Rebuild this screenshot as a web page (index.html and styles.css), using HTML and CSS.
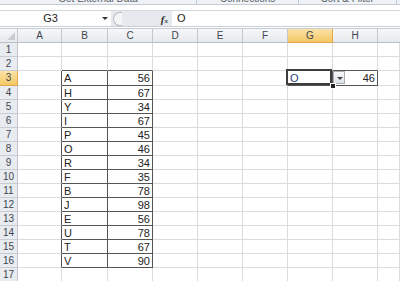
FILE: index.html
```html
<!DOCTYPE html>
<html lang="en">
<head>
    <meta charset="UTF-8">
    <title>Book1 - Excel</title>
    <link rel="stylesheet" href="styles.css">
</head>
<body>
    <div class="ribbon">
        <span class="group g1">Get External Data</span>
        <span class="group g2">Connections</span>
        <span class="group g3">Sort &amp; Filter</span>
    </div>

    <div class="formula-bar">
        <div class="name-box">G3<span class="arrow"></span></div>
        <div class="fx-area">
            <span class="handle"></span>
            <span class="fx">f<small>x</small></span>
        </div>
        <div class="formula-input">O</div>
    </div>

    <div class="sheet">
        <div class="corner"><span class="tri"></span></div>
        <div class="ch">A</div><div class="ch">B</div><div class="ch">C</div><div class="ch">D</div>
        <div class="ch">E</div><div class="ch">F</div><div class="ch sel">G</div><div class="ch">H</div><div class="ch last"></div>

        <div class="rh">1</div><div></div><div></div><div></div><div></div><div></div><div></div><div></div><div></div><div></div>
        <div class="rh">2</div><div></div><div class="bb"></div><div class="bb"></div><div></div><div></div><div></div><div class="bb"></div><div class="bb"></div><div></div>

        <div class="rh sel">3</div><div class="br"></div><div class="t">A</div><div class="t n">56</div><div></div><div></div><div class="br"></div>
        <div class="active">O<span class="sel-box"></span><span class="drop"></span><span class="fill"></span></div>
        <div class="t n">46</div><div></div>

        <div class="rh">4</div><div class="br"></div><div class="t">H</div><div class="t n">67</div><div></div><div></div><div></div><div></div><div></div><div></div>
        <div class="rh">5</div><div class="br"></div><div class="t">Y</div><div class="t n">34</div><div></div><div></div><div></div><div></div><div></div><div></div>
        <div class="rh">6</div><div class="br"></div><div class="t">I</div><div class="t n">67</div><div></div><div></div><div></div><div></div><div></div><div></div>
        <div class="rh">7</div><div class="br"></div><div class="t">P</div><div class="t n">45</div><div></div><div></div><div></div><div></div><div></div><div></div>
        <div class="rh">8</div><div class="br"></div><div class="t">O</div><div class="t n">46</div><div></div><div></div><div></div><div></div><div></div><div></div>
        <div class="rh">9</div><div class="br"></div><div class="t">R</div><div class="t n">34</div><div></div><div></div><div></div><div></div><div></div><div></div>
        <div class="rh">10</div><div class="br"></div><div class="t">F</div><div class="t n">35</div><div></div><div></div><div></div><div></div><div></div><div></div>
        <div class="rh">11</div><div class="br"></div><div class="t">B</div><div class="t n">78</div><div></div><div></div><div></div><div></div><div></div><div></div>
        <div class="rh">12</div><div class="br"></div><div class="t">J</div><div class="t n">98</div><div></div><div></div><div></div><div></div><div></div><div></div>
        <div class="rh">13</div><div class="br"></div><div class="t">E</div><div class="t n">56</div><div></div><div></div><div></div><div></div><div></div><div></div>
        <div class="rh">14</div><div class="br"></div><div class="t">U</div><div class="t n">78</div><div></div><div></div><div></div><div></div><div></div><div></div>
        <div class="rh">15</div><div class="br"></div><div class="t">T</div><div class="t n">67</div><div></div><div></div><div></div><div></div><div></div><div></div>
        <div class="rh">16</div><div class="br"></div><div class="t">V</div><div class="t n">90</div><div></div><div></div><div></div><div></div><div></div><div></div>
        <div class="rh">17</div><div></div><div></div><div></div><div></div><div></div><div></div><div></div><div></div><div></div>
    </div>
</body>
</html>
```

FILE: styles.css
```css
body {
    margin: 0;
    font-family: "Liberation Sans", Arial, sans-serif;
    font-size: 11px;
    color: #222;
    background-color: #ffffff;
    width: 400px;
    height: 281px;
    overflow: hidden;
}

/* ribbon group labels, cut off at the top */
.ribbon {
    height: 4px;
    overflow: hidden;
    position: relative;
    background-color: #eef1f5;
    border-bottom: 1px solid #c5cbd3;
    display: flex;
    font-size: 10px;
    color: #5a5f66;
}

.group {
    display: block;
    margin-top: -7px;
    line-height: 12px;
    text-align: center;
    border-right: 1px solid #c5cbd3;
}

.g1 {
    width: 196px;
}

.g2 {
    width: 101px;
}

.g3 {
    width: 97px;
}

.formula-bar {
    margin-top: 5px;
    height: 15px;
    display: flex;
    background-color: #e3e7ec;
    border-top: 1px solid #d3d8de;
    border-bottom: 1px solid #c8ced5;
}

.name-box {
    width: 111px;
    background-color: #ffffff;
    text-align: center;
    line-height: 15px;
    position: relative;
    padding-right: 10px;
    box-sizing: border-box;
}

.name-box .arrow {
    position: absolute;
    right: 3px;
    top: 6px;
    border-left: 3px solid transparent;
    border-right: 3px solid transparent;
    border-top: 3px solid #333;
}

.fx-area {
    width: 61px;
    display: flex;
    align-items: center;
    justify-content: space-between;
    padding: 0 4px 0 2px;
    box-sizing: border-box;
    background-color: #e6e9ed;
}

.handle {
    width: 8px;
    height: 12px;
    border: 1px solid #b5bac1;
    border-right: none;
    border-radius: 7px 0 0 7px;
    background-color: #f4f5f7;
}

.fx {
    font-family: "Liberation Serif", serif;
    font-style: italic;
    font-weight: bold;
    font-size: 11px;
    color: #333;
}

.fx small {
    font-size: 7px;
}

.formula-input {
    flex: 1;
    background-color: #ffffff;
    padding-left: 5px;
    line-height: 15px;
}

/* worksheet grid */
.sheet {
    margin-top: 1px;
    display: grid;
    grid-template-columns: 18px 44px 46px 45px 45px 45px 45px 45px 45px 22px;
    grid-template-rows: 14px 14px 14px 15px repeat(14, 14px);
    border-top: 1px solid #c6cbd1;
}

.sheet > div {
    box-sizing: border-box;
    border-right: 1px solid #dadcdf;
    border-bottom: 1px solid #dadcdf;
    line-height: 14px;
    white-space: nowrap;
}

.sheet > .corner,
.sheet > .ch,
.sheet > .rh {
    background: linear-gradient(#f6f7f9, #e6e9ed);
    border-right: 1px solid #c3c8ce;
    border-bottom: 1px solid #b9bfc6;
    color: #3e4651;
    text-align: center;
    font-size: 10px;
    line-height: 13px;
}

.sheet > .rh {
    background: #e8ebef;
    border-bottom: 1px solid #c9cdd3;
}

.sheet > .ch.last {
    border-right: none;
}

.sheet > .sel {
    background: linear-gradient(#fbe3a8, #f3c862);
    border-right-color: #e3a84a;
    border-bottom-color: #e3a84a;
}

.corner {
    position: relative;
}

.corner .tri {
    position: absolute;
    right: 2px;
    bottom: 2px;
    border-left: 8px solid transparent;
    border-bottom: 8px solid #c8ccd2;
}

.sheet > .t {
    padding-left: 2px;
    border-right-color: #555;
    border-bottom-color: #555;
}

.sheet > .n {
    text-align: right;
    padding-right: 2px;
}

.sheet > .br {
    border-right-color: #555;
}

.sheet > .bb {
    border-bottom-color: #555;
}

.sheet > .active {
    position: relative;
    padding-left: 2px;
    color: #1f3f7a;
    border-right-color: #555;
    border-bottom-color: #555;
}

.sel-box {
    position: absolute;
    left: -2px;
    top: -2px;
    width: 46px;
    height: 16px;
    border: 2px solid #3d3d3d;
    box-sizing: border-box;
}

.drop {
    position: absolute;
    left: 45px;
    top: 0;
    width: 12px;
    height: 13px;
    box-sizing: border-box;
    border: 1px solid #a9aeb5;
    background: linear-gradient(#f7f8f9, #dfe2e6);
}

.drop::after {
    content: "";
    position: absolute;
    left: 3px;
    top: 5px;
    border-left: 3px solid transparent;
    border-right: 3px solid transparent;
    border-top: 3px solid #444;
}

.fill {
    position: absolute;
    left: 42px;
    top: 12px;
    width: 4px;
    height: 4px;
    background-color: #222;
    border: 1px solid #fff;
}
```
